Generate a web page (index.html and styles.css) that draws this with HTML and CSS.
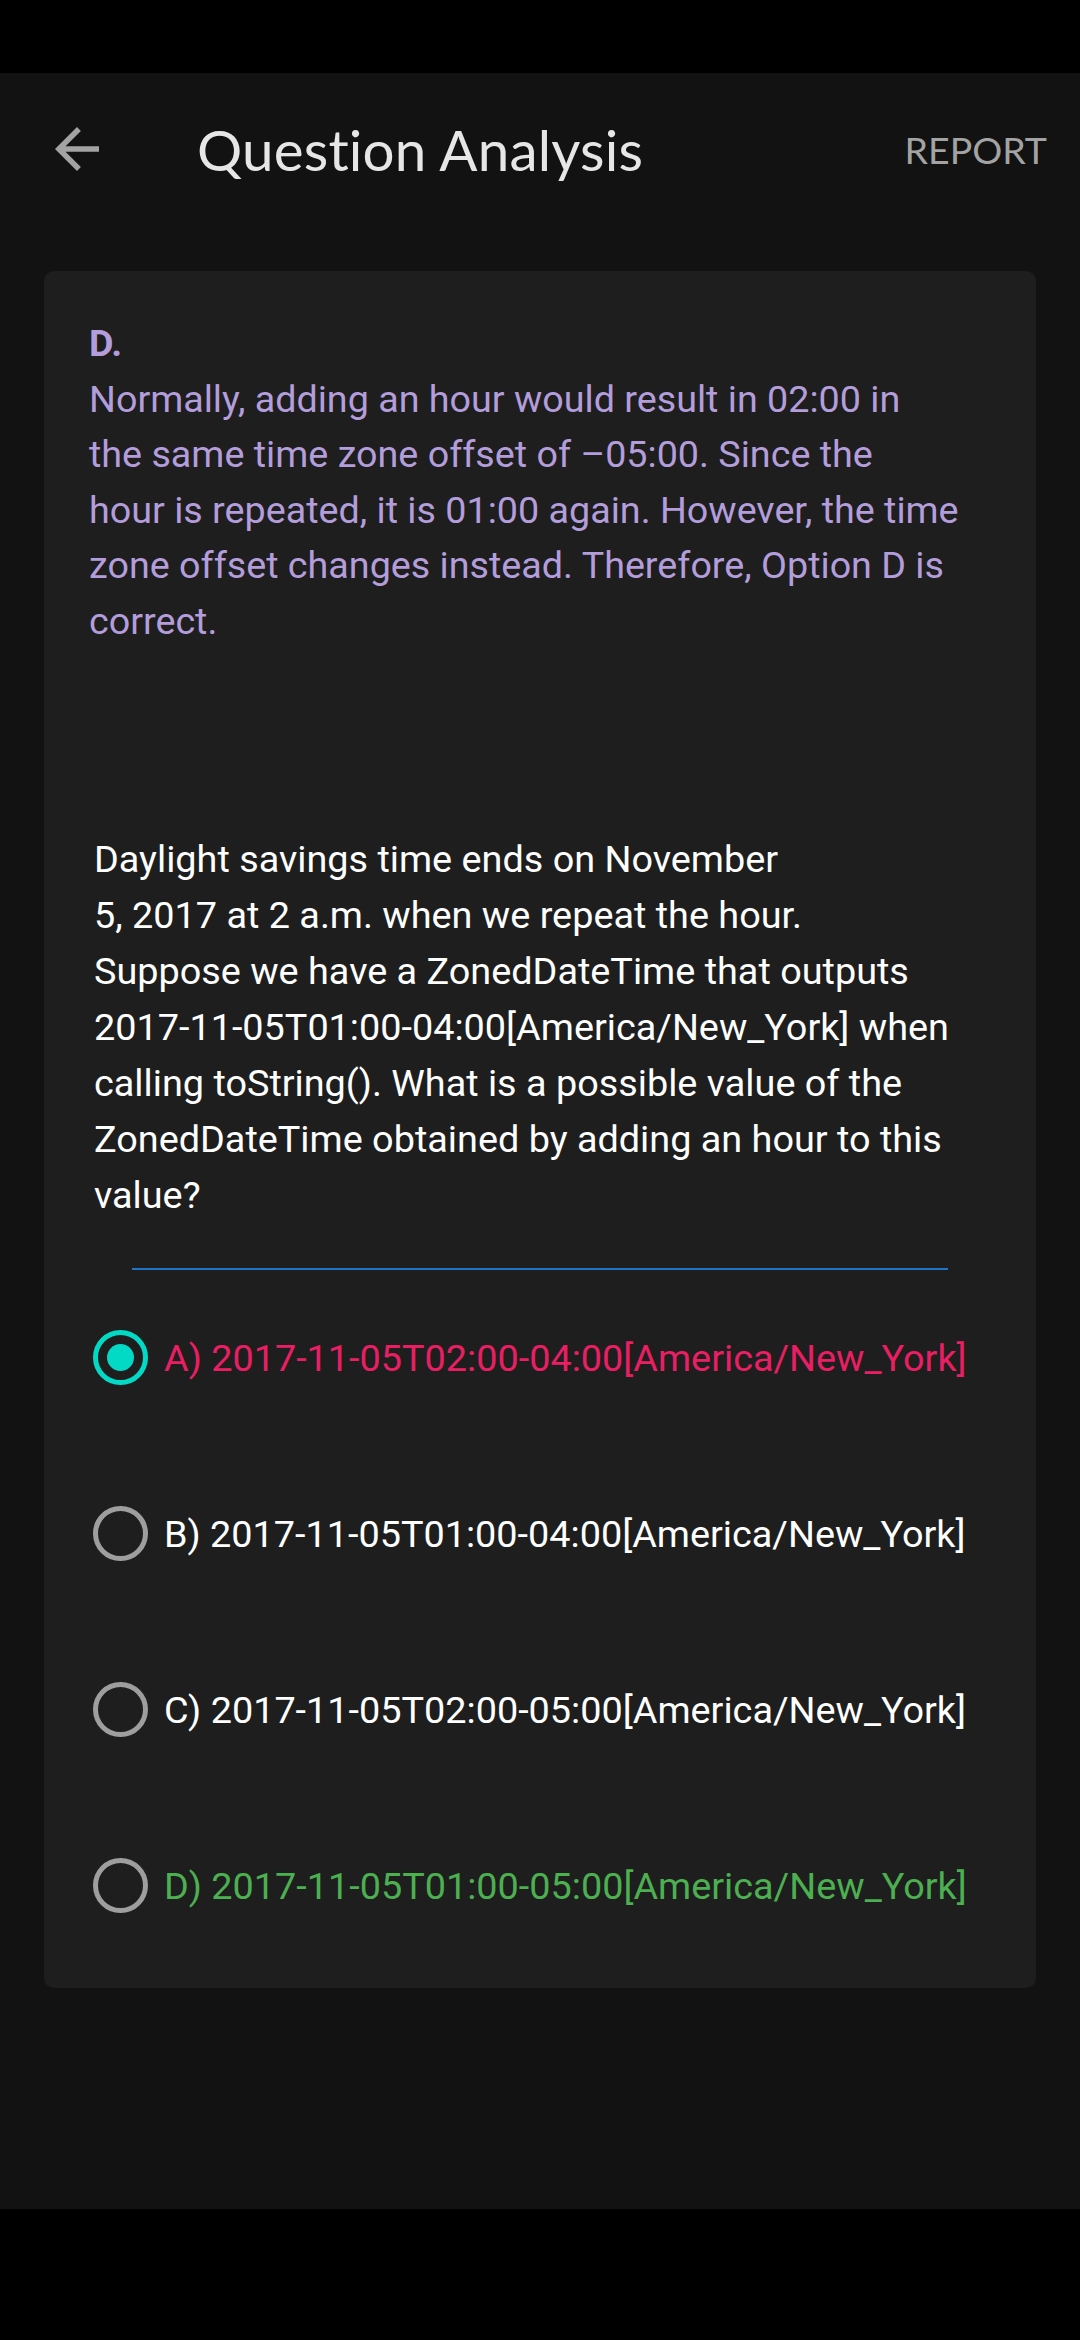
FILE: index.html
```html
<!DOCTYPE html>
<html>
<head>
<meta charset="utf-8">
<link rel="stylesheet" href="styles.css">
</head>
<body>
<div class="screen">
  <div class="statusbar"></div>
  <div class="app">
    <header class="appbar">
      <div class="back">
        <svg viewBox="0 0 24 24" width="66" height="66"><path d="M20 11H7.83l5.59-5.59L12 4l-8 8 8 8 1.41-1.41L7.83 13H20v-2z" fill="#a3a3a3"/></svg>
      </div>
      <h1 class="title">Question Analysis</h1>
      <div class="report">REPORT</div>
    </header>
    <main class="card">
      <p class="explanation"><b>D.</b><br>Normally, adding an hour would result in 02:00 in<br>the same time zone offset of –05:00. Since the<br>hour is repeated, it is 01:00 again. However, the time<br>zone offset changes instead. Therefore, Option D is<br>correct.</p>
      <p class="question">Daylight savings time ends on November<br>5, 2017 at 2 a.m. when we repeat the hour.<br>Suppose we have a ZonedDateTime that outputs<br>2017-11-05T01:00-04:00[America/New_York] when<br>calling toString(). What is a possible value of the<br>ZonedDateTime obtained by adding an hour to this<br>value?</p>
      <div class="divider"></div>
      <ul class="options">
        <li class="option wrong"><span class="radio checked"></span><span class="label">A) 2017-11-05T02:00-04:00[America/New_York]</span></li>
        <li class="option"><span class="radio"></span><span class="label">B) 2017-11-05T01:00-04:00[America/New_York]</span></li>
        <li class="option"><span class="radio"></span><span class="label">C) 2017-11-05T02:00-05:00[America/New_York]</span></li>
        <li class="option right"><span class="radio"></span><span class="label">D) 2017-11-05T01:00-05:00[America/New_York]</span></li>
      </ul>
    </main>
  </div>
  <div class="navbar"></div>
</div>
</body>
</html>
```

FILE: styles.css
```css
* { box-sizing: border-box; }
html, body { margin: 0; padding: 0; background: #000; }
.screen {
  width: 1080px;
  height: 2340px;
  display: flex;
  flex-direction: column;
  font-family: Roboto, "Liberation Sans", sans-serif;
}
.statusbar { height: 73px; background: #000; flex: none; }
.navbar { height: 131px; background: #000; flex: none; }
.app { flex: 1; background: #121212; display: flex; flex-direction: column; }
.appbar {
  height: 152px;
  display: flex;
  align-items: center;
  flex: none;
  margin-bottom: 2px;
}
.back { width: 66px; height: 66px; margin-left: 44px; display: flex; }
.title {
  margin: 0 0 0 87px;
  font-family: Lato, "Open Sans", sans-serif;
  font-weight: 400;
  font-size: 56.5px;
  color: #e6e6e6;
  flex: 1;
  letter-spacing: 0.2px;
}
.report {
  font-family: Lato, "Open Sans", sans-serif;
  font-size: 37.5px;
  color: #a3a3a3;
  margin-right: 33px;
  letter-spacing: 0;
}
.card {
  margin: 44px 44px 0;
  background: #1e1e1e;
  border-radius: 10px;
  padding: 45px 45px 14px;
  height: 1717px;
  flex: none;
}
.explanation {
  margin: 0;
  font-size: 37.7px;
  line-height: 55.6px;
  color: #b39ddb;
}
.explanation b { font-weight: 700; }
.question {
  margin: 181px 0 0 5px;
  font-size: 37.8px;
  line-height: 56px;
  color: #ffffff;
}
.divider {
  margin: 45px 43px 0;
  height: 2px;
  background: #1e73c8;
}
.options { list-style: none; margin: 0; padding: 0; }
.option {
  height: 176px;
  display: flex;
  align-items: center;
  padding-left: 4px;
  gap: 16px;
  font-size: 37.8px;
  color: #ffffff;
}
.option.wrong { color: #e91e63; }
.option.right { color: #4caf50; }
.radio {
  width: 55px;
  height: 55px;
  border-radius: 50%;
  border: 5.5px solid #9e9e9e;
  flex: none;
  display: flex;
  align-items: center;
  justify-content: center;
}
.radio.checked { border-color: #03dac5; }
.radio.checked::after {
  content: "";
  width: 27px;
  height: 27px;
  border-radius: 50%;
  background: #03dac5;
}
```
